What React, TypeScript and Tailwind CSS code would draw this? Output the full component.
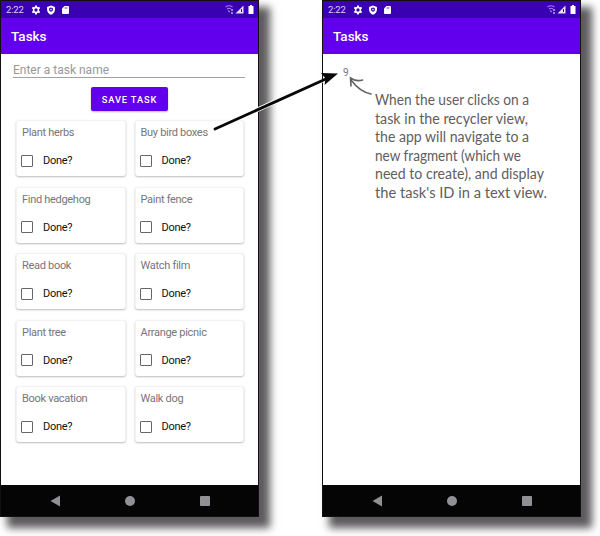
import type { ReactNode } from "react";

const tasks = [
  "Plant herbs",
  "Buy bird boxes",
  "Find hedgehog",
  "Paint fence",
  "Read book",
  "Watch film",
  "Plant tree",
  "Arrange picnic",
  "Book vacation",
  "Walk dog",
];

const notes = [
  { text: "When the user clicks on a", width: 154 },
  { text: "task in the recycler view,", width: 153 },
  { text: "the app will navigate to a", width: 154 },
  { text: "new fragment (which we", width: 146 },
  { text: "need to create), and display", width: 169 },
  { text: "the task's ID in a text view.", width: 172 },
];

function StatusBar() {
  return (
    <div className="flex h-[17px] shrink-0 items-center justify-between bg-[#3a00b3] pl-[5px] pr-[4px] text-white">
      <div className="flex items-center">
        <span className="w-[19px] whitespace-nowrap text-[9.5px] leading-none tracking-[-0.15px] text-[#dcd0f5]">2:22</span>
        <svg className="ml-[6px]" width="10" height="10" viewBox="0 0 24 24">
          <path
            fill="currentColor"
            fillRule="evenodd"
            d="M10 1h4l.6 3.2 2.2 1.2 3-1.1 2 3.5L19.400 10v4l2.400 2.200-2 3.500-3-1.100-2.200 1.200L14 23h-4l-.6-3.200-2.200-1.200-3 1.100-2-3.500L4.600 14v-4L2.200 7.800l2-3.500 3 1.100 2.200-1.200zM12 8a4 4 0 1 0 0 8 4 4 0 0 0 0-8z"
          />
        </svg>
        <svg className="ml-[5px]" width="10" height="10" viewBox="0 0 24 24">
          <path
            fill="currentColor"
            fillRule="evenodd"
            d="M12 1 2.500 4.500V11c0 6 4 10.500 9.500 12.500C17.500 21.500 21.500 17 21.500 11V4.500zM12 6a5 5 0 1 1 0 10 5 5 0 0 1 0-10z"
          />
          <circle cx="12" cy="11" r="2" fill="currentColor" />
        </svg>
        <svg className="ml-[5px]" width="9" height="10" viewBox="0 0 9 10">
          <path fill="currentColor" d="M3.500 1H7a1 1 0 0 1 1 1v6a1 1 0 0 1-1 1H2a1 1 0 0 1-1-1V3.500z" />
          <path stroke="#3a00b3" strokeWidth=".8" d="M3.500 3h3" />
        </svg>
      </div>
      <div className="flex items-center">
        <svg width="9" height="9" viewBox="0 0 9 9" fill="none">
          <path d="M.5 2q3.500-2.500 7 0M2 4q2-1.500 4 0M3 5.500l2 1.500" stroke="#a77be8" strokeWidth="1.100" />
          <path d="M6 5h2M6 8h2" stroke="#fff" strokeWidth="1.200" />
        </svg>
        <svg className="ml-[1px]" width="9" height="9" viewBox="0 0 9 9">
          <path d="M8.500.5v8h-8z" fill="#e8e0fa" />
          <path d="M6.500 4v3" stroke="#3a00b3" />
        </svg>
        <svg className="ml-[4px]" width="6" height="9" viewBox="0 0 6 9">
          <path d="M2 0h2v1h1.500v8h-5V1H2z" fill="#fff" />
        </svg>
      </div>
    </div>
  );
}

function Phone({ children }: { children: ReactNode }) {
  return (
    <section className="flex h-[517px] w-[259px] shrink-0 flex-col border border-[#111] bg-white shadow-[9px_9px_8px_2px_#5d5b5d]">
      <StatusBar />
      <header className="flex h-[36px] shrink-0 items-center bg-[#6200ee] pl-[10px] text-[13.5px] font-medium text-white">
        Tasks
      </header>
      <main className="min-h-0 flex-1">{children}</main>
      <nav className="flex h-[31px] shrink-0 items-center justify-around bg-[#050505] px-[16px]">
        <svg width="10" height="12" viewBox="0 0 10 12">
          <path d="M10 .5v11L.5 6z" fill="#929094" />
        </svg>
        <span className="size-[10px] rounded-full bg-[#929094]" />
        <span className="size-[10px] rounded-[1px] bg-[#929094]" />
      </nav>
    </section>
  );
}

function TaskCard({ name }: { name: string }) {
  return (
    <article className="flex h-[56px] flex-col rounded-[3px] border border-b-0 border-[#f2f2f3] bg-white pl-[5px] pt-[4px] shadow-[0_1px_2px_#bbb]">
      <h2 className="h-[15px] whitespace-nowrap text-[11px] leading-[15px] tracking-[-0.3px] text-[#77757a]">{name}</h2>
      <label className="-ml-[1px] mt-[14px] flex h-[13px] items-center text-[11px] leading-[13px] tracking-[-0.3px] text-[#111]">
        <span className="mr-[10px] size-[12px] rounded-[1px] border-[1.500px] border-[#67656a]" />
        Done?
      </label>
    </article>
  );
}

export default function App() {
  return (
    <div className="relative flex h-[536px] w-[600px] gap-[63px] overflow-hidden bg-white font-['Roboto',sans-serif]">
      <Phone>
        <div className="ml-[12px] mt-[6px] h-[18px] w-[232px] border-b border-[#a3a1a6] text-[12px] leading-[20px] text-[#99979c]">
          Enter a task name
        </div>
        <button className="mx-auto mt-[9px] flex h-[24px] w-[77px] items-center justify-center rounded-[2px] bg-[#6200ee] pt-[1px] text-[9.300px] font-medium tracking-[0.85px] text-white shadow-[0_1px_2px_#bbb]">
          SAVE TASK
        </button>
        <div className="ml-[15px] mt-[9px] grid w-[228px] grid-cols-2 gap-x-[9px] gap-y-[10.500px]">
          {tasks.map((name) => (
            <TaskCard key={name} name={name} />
          ))}
        </div>
      </Phone>
      <Phone>
        <div className="ml-[20px] mt-[12px] h-[13px] text-[10px] leading-[14px] text-[#77757a]">9</div>
        <div className="ml-[52px] mt-[12px]">
          {notes.map((line) => (
            <svg key={line.text} className="block h-[18.600px] w-[180px] overflow-visible">
              <text
                x="0"
                y="14"
                textLength={line.width}
                lengthAdjust="spacingAndGlyphs"
                fill="#5f5d62"
                className="font-['Lato',sans-serif] text-[15.500px]"
              >
                {line.text}
              </text>
            </svg>
          ))}
        </div>
      </Phone>
      <svg className="pointer-events-none absolute inset-0" width="600" height="536" viewBox="0 0 600 536" fill="none">
        <path d="M215 129 322 80.500" stroke="#fff" strokeWidth="4.500" />
        <path d="M215 129 328 78" stroke="#080808" strokeWidth="2.800" strokeLinecap="round" />
        <path d="m338 73.500-17-.5 4.500 5.500-1 6.500z" fill="#080808" />
        <path d="M371 94q-11-2-20-14m0 6-.5-8q6 4 12 2" stroke="#626066" strokeWidth="1.600" strokeLinecap="round" />
      </svg>
    </div>
  );
}
